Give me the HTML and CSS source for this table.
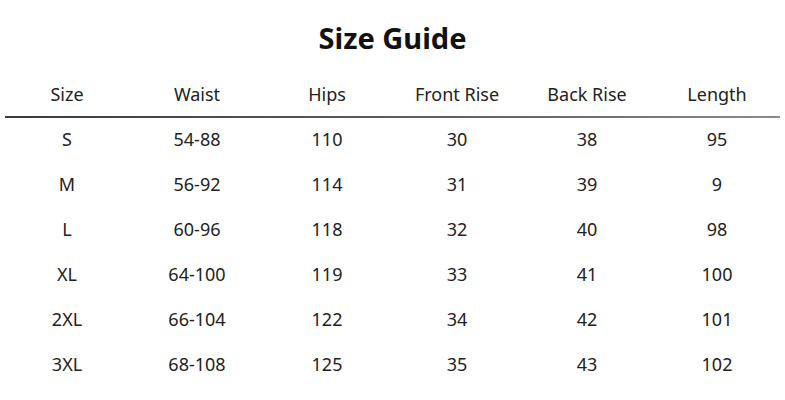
FILE: index.html
```html
<!DOCTYPE html>
<html>
<head>
<meta charset="utf-8">
<link rel="stylesheet" href="styles.css">
</head>
<body>
<div class="page">
  <h1 class="title">Size Guide</h1>
  <div class="table">
    <div class="row head">
      <div>Size</div><div>Waist</div><div>Hips</div><div>Front Rise</div><div>Back Rise</div><div>Length</div>
    </div>
    <div class="rule"></div>
    <div class="row"><div>S</div><div>54-88</div><div>110</div><div>30</div><div>38</div><div>95</div></div>
    <div class="row"><div>M</div><div>56-92</div><div>114</div><div>31</div><div>39</div><div>9</div></div>
    <div class="row"><div>L</div><div>60-96</div><div>118</div><div>32</div><div>40</div><div>98</div></div>
    <div class="row"><div>XL</div><div>64-100</div><div>119</div><div>33</div><div>41</div><div>100</div></div>
    <div class="row"><div>2XL</div><div>66-104</div><div>122</div><div>34</div><div>42</div><div>101</div></div>
    <div class="row"><div>3XL</div><div>68-108</div><div>125</div><div>35</div><div>43</div><div>102</div></div>
  </div>
</div>
</body>
</html>
```
FILE: styles.css
```css
html, body {
  margin: 0;
  padding: 0;
  background: #ffffff;
}
.page {
  width: 785px;
  height: 400px;
  font-family: "Noto Sans", "Open Sans", sans-serif;
  color: #222;
}
.title {
  margin: 0;
  padding-top: 18px;
  height: 58px;
  box-sizing: border-box;
  text-align: center;
  font-size: 29px;
  font-weight: 700;
  line-height: 40px;
  color: #111;
}
.table {
  padding-left: 2px;
}
.row {
  display: grid;
  grid-template-columns: repeat(6, 130px);
  height: 45px;
  align-items: center;
  font-size: 18px;
  text-align: center;
}
.row.head {
  height: 44px;
  margin-top: 14px;
}
.rule {
  margin: 0 5px 0 3px;
  height: 2px;
  background: linear-gradient(to right, #3a3a3a, #6a6a6a 70%, #8a8a8a);
  margin-bottom: -2px;
}
```
